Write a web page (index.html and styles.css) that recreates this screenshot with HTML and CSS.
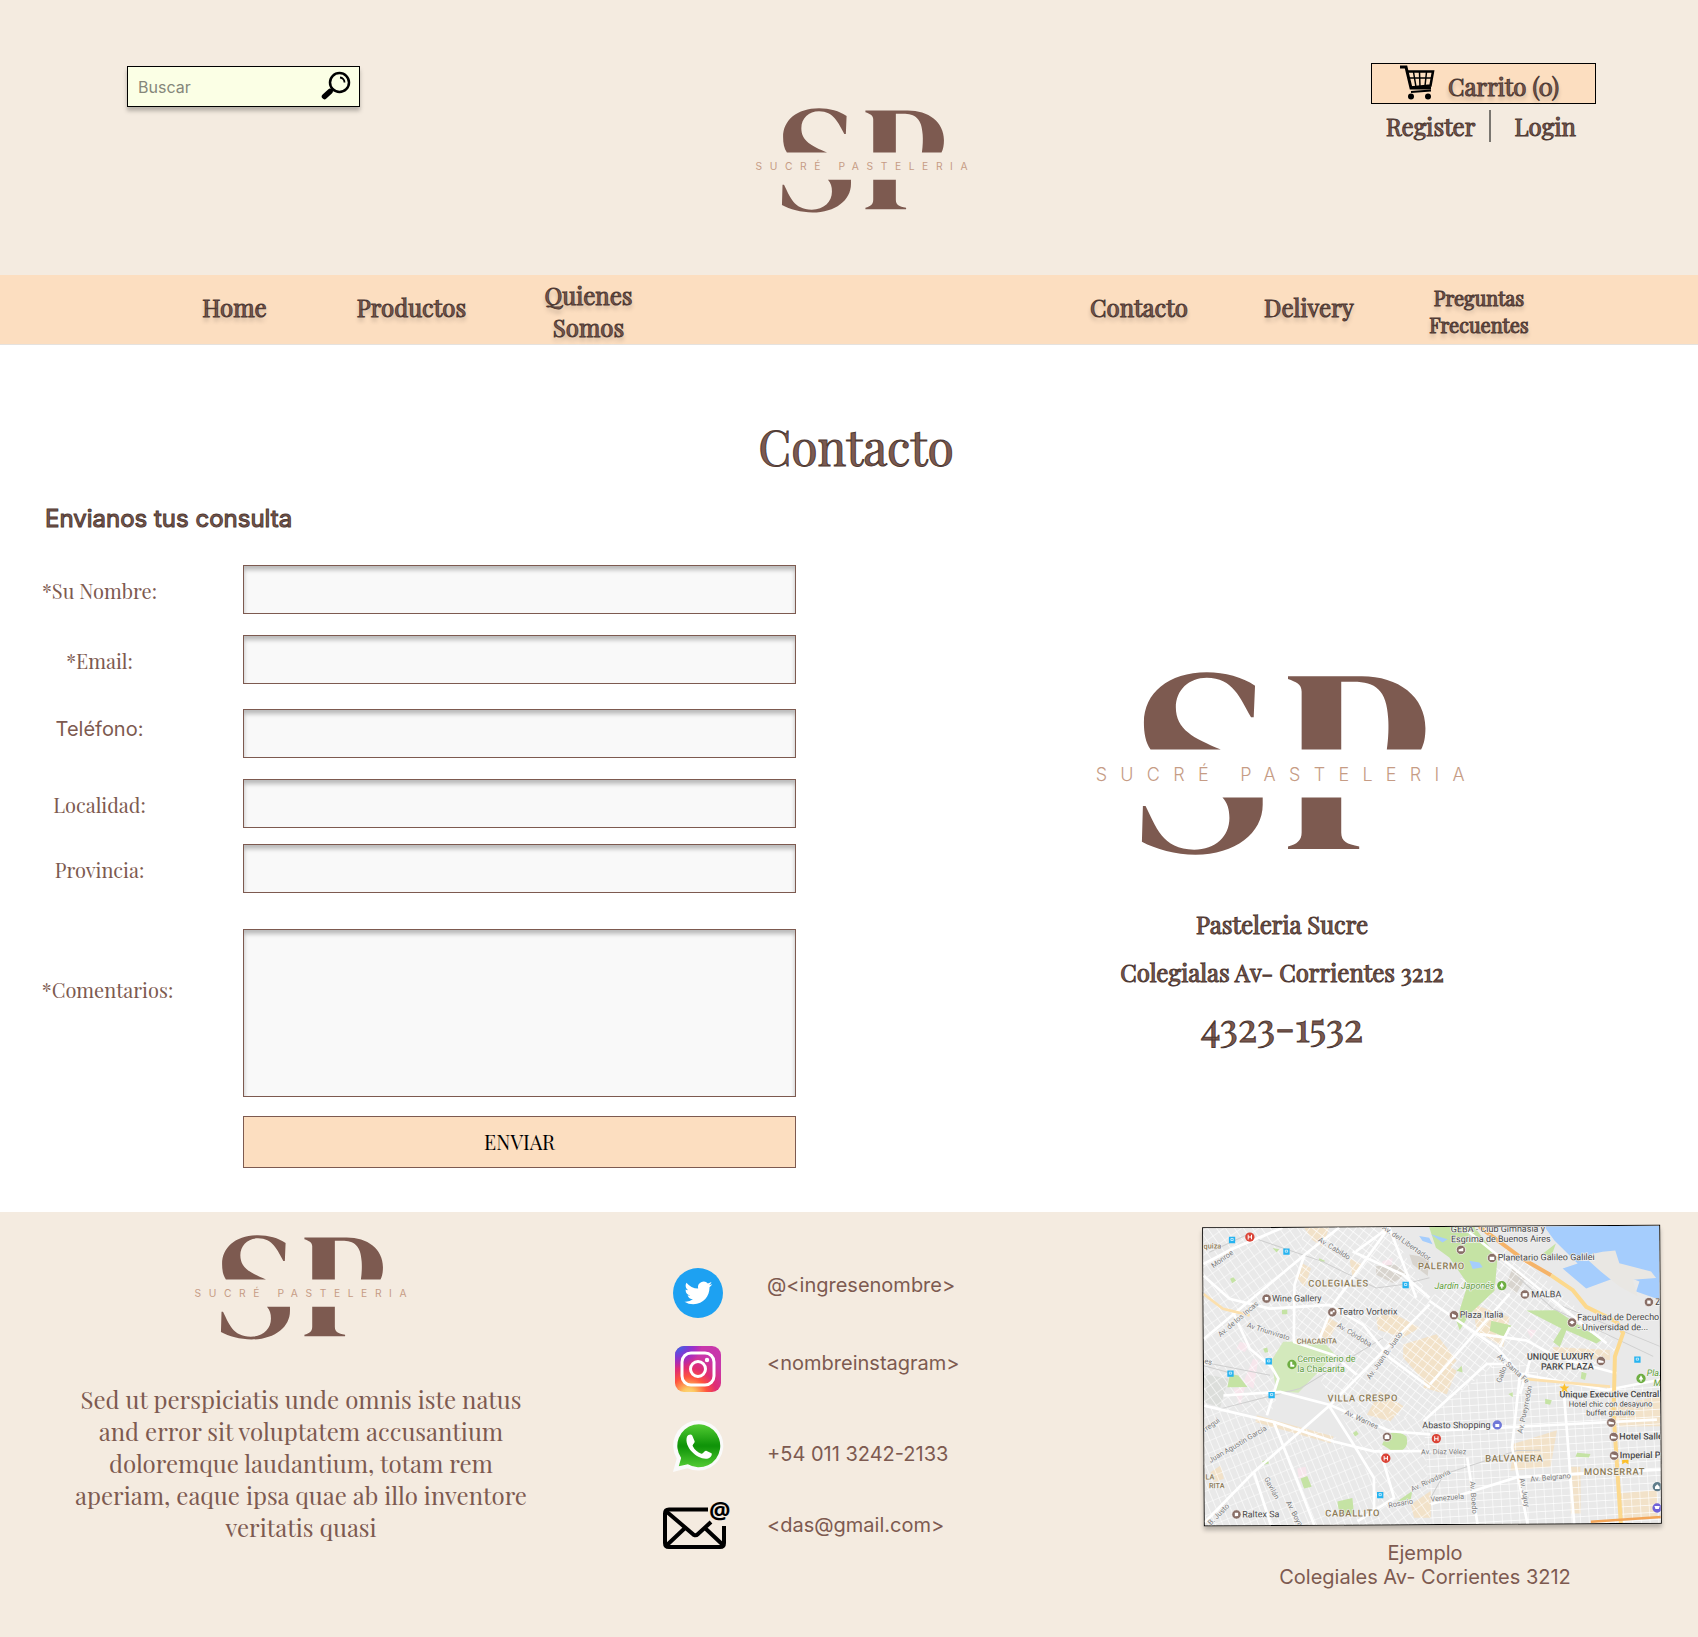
FILE: index.html
```html
<!DOCTYPE html>
<html lang="es">
<head>
<meta charset="utf-8">
<meta name="viewport" content="width=device-width, initial-scale=1">
<title>Contacto - Sucré Pasteleria</title>
<link rel="stylesheet" href="styles.css">
</head>
<body>
<svg class="defs" aria-hidden="true">
  <symbol id="monogram" viewBox="50 60 1120 560">
    <path d="M215 299C200 278 195 250 195 218C195 130 268 67 384 67C440 67 490 82 529 107L525 202H517C485 145 462 83 384 83C330 83 291 120 291 172C291 240 345 265 426 299Z"/>
    <path d="M431 443H552V465C552 550 470 615 350 615C290 615 230 598 189 576L192 469H200C230 528 250 600 346 600C410 600 452 560 452 505C452 480 446 458 431 443Z"/>
    <path d="M628 79H850C960 79 1041 140 1041 235C1041 262 1037 282 1028 299H925C930 265 931 230 929 205C925 120 890 95 825 95H788V299H669V125C669 102 652 96 628 87Z"/>
    <path d="M669 443H788V548C788 575 805 583 842 590V598H628V590C655 583 669 572 669 548Z"/>
  </symbol>
</svg>

<header class="header">
  <form class="search" role="search">
    <input class="search__input" type="search" placeholder="Buscar" aria-label="Buscar">
    <button class="search__button" type="button" aria-label="Buscar">
      <svg width="30" height="30" viewBox="0 0 30 30"><circle cx="18.500" cy="11.500" r="9.500" fill="none" stroke="#000" stroke-width="2.500"/><path d="M19 6.500a5 5 0 0 1 4.500 5" fill="none" stroke="#000" stroke-width="1.800"/><path d="M9 20.500L3.500 25.500" stroke="#000" stroke-width="5.500" stroke-linecap="round"/><path d="M10 20L12.500 17.500" stroke="#000" stroke-width="2.500"/></svg>
    </button>
  </form>
  <a class="header__logo" href="#" aria-label="Sucré Pasteleria">
    <svg class="logo" viewBox="0 60 1220 560"><use class="logo__mark" href="#monogram" x="50" y="60" width="1120" height="560"/><text class="logo__word" x="50" y="394">SUCRÉ PASTELERIA</text></svg>
  </a>
  <div class="account">
    <a class="cart" href="#">
      <svg width="36" height="35" viewBox="0 0 36 35" fill="none" stroke="#000"><path d="M1 2H7L12 23H32" stroke-width="3"/><path d="M8 6.500H34L31.500 20.500L12 22.500" stroke-width="2.500"/><path d="M14.500 7L17 22M20.500 7L21 22M27.500 7L26 21M9 13H33" stroke-width="1.500"/><path d="M12 27L32 25.500" stroke-width="2"/><circle cx="12" cy="31.500" r="3" fill="#000" stroke="none"/><circle cx="29" cy="31.500" r="3" fill="#000" stroke="none"/></svg>
      <span class="title title--raised">Carrito (0)</span>
    </a>
    <div class="account__links">
      <a class="title" href="#">Register</a>
      <a class="title account__login" href="#">Login</a>
    </div>
  </div>
</header>

<nav class="nav">
  <ul class="nav__group nav__group--left">
    <li class="nav__single"><a class="title title--raised" href="#">Home</a></li>
    <li class="nav__single"><a class="title title--raised" href="#">Productos</a></li>
    <li><a class="title title--raised" href="#">Quienes<br>Somos</a></li>
  </ul>
  <ul class="nav__group nav__group--right">
    <li class="nav__single"><a class="title title--raised" href="#">Contacto</a></li>
    <li class="nav__single"><a class="title title--raised" href="#">Delivery</a></li>
    <li><a class="title title--raised title--small" href="#">Preguntas<br>Frecuentes</a></li>
  </ul>
</nav>

<main class="main">
  <h1 class="title main__title">Contacto</h1>
  <form class="form">
    <h2 class="form__title">Envianos tus consulta</h2>
    <div class="row"><label for="nombre">*Su Nombre:</label><input id="nombre" type="text"></div>
    <div class="row"><label for="email">*Email:</label><input id="email" type="email"></div>
    <div class="row row--phone"><label for="telefono">Teléfono:</label><input id="telefono" type="tel"></div>
    <div class="row"><label for="localidad">Localidad:</label><input id="localidad" type="text"></div>
    <div class="row row--tight"><label for="provincia">Provincia:</label><input id="provincia" type="text"></div>
    <div class="row row--comments"><label for="comentarios">*Comentarios:</label><textarea id="comentarios"></textarea></div>
    <button class="form__submit" type="button">ENVIAR</button>
  </form>
  <section class="shop">
    <svg class="logo logo--large" viewBox="0 60 1220 560" role="img" aria-label="Sucré Pasteleria"><use class="logo__mark" href="#monogram" x="50" y="60" width="1120" height="560"/><text class="logo__word" x="50" y="394">SUCRÉ PASTELERIA</text></svg>
    <p class="title shop__name">Pasteleria Sucre</p>
    <p class="title shop__address">Colegialas Av- Corrientes 3212</p>
    <p class="title shop__phone">4323-1532</p>
  </section>
</main>

<footer class="footer">
  <section class="about">
    <svg class="logo" viewBox="0 60 1220 560" role="img" aria-label="Sucré Pasteleria"><use class="logo__mark" href="#monogram" x="50" y="60" width="1120" height="560"/><text class="logo__word" x="50" y="394">SUCRÉ PASTELERIA</text></svg>
    <p class="about__text">Sed ut perspiciatis unde omnis iste natus<br>and error sit voluptatem accusantium<br>doloremque laudantium, totam rem<br>aperiam, eaque ipsa quae ab illo inventore<br>veritatis quasi</p>
  </section>
  <ul class="social">
    <li>
      <span class="social__icon"><svg width="50" height="50" viewBox="0 0 50 50"><circle cx="25" cy="25" r="25" fill="#1da1f2"/><path transform="translate(11.500 11) scale(1.160)" fill="#fff" d="M23.953 4.570a10 10 0 01-2.825.775 4.958 4.958 0 002.163-2.723c-.951.555-2.005.959-3.127 1.184a4.920 4.920 0 00-8.384 4.482C7.690 8.095 4.067 6.130 1.640 3.162a4.822 4.822 0 00-.666 2.475c0 1.710.870 3.213 2.188 4.096a4.904 4.904 0 01-2.228-.616v.060a4.923 4.923 0 003.946 4.827 4.996 4.996 0 01-2.212.085 4.936 4.936 0 004.604 3.417 9.867 9.867 0 01-6.102 2.105c-.390 0-.779-.023-1.170-.067a13.995 13.995 0 007.557 2.209c9.053 0 13.998-7.496 13.998-13.985 0-.210 0-.420-.015-.630A9.935 9.935 0 0024 4.590z"/></svg></span>
      <a href="#">@&lt;ingresenombre&gt;</a>
    </li>
    <li>
      <span class="social__icon"><svg width="46" height="46" viewBox="0 0 46 46"><defs><radialGradient id="ig-a" cx=".3" cy="1.070" r="1"><stop offset="0" stop-color="#fd8"/><stop offset=".15" stop-color="#fdc760"/><stop offset=".4" stop-color="#ff543e"/><stop offset=".6" stop-color="#e02d72"/><stop offset=".9" stop-color="#c837ab"/></radialGradient><radialGradient id="ig-b" cx="0" cy="-.1" r=".6"><stop offset="0" stop-color="#3771c8"/><stop offset=".3" stop-color="#4a5fe0"/><stop offset="1" stop-color="#6600ff" stop-opacity="0"/></radialGradient></defs><rect width="46" height="46" rx="9" fill="url(#ig-a)"/><rect width="46" height="46" rx="9" fill="url(#ig-b)"/><rect x="7" y="7" width="32" height="32" rx="9" fill="none" stroke="#fff" stroke-width="3"/><circle cx="23" cy="23" r="7.500" fill="none" stroke="#fff" stroke-width="3"/><circle cx="32" cy="14" r="2.200" fill="#fff"/></svg></span>
      <a href="#">&lt;nombreinstagram&gt;</a>
    </li>
    <li class="social__whatsapp">
      <span class="social__icon"><svg width="52" height="52" viewBox="0 0 54 54"><defs><linearGradient id="wa" x1="0" y1="0" x2="0" y2="1"><stop offset="0" stop-color="#52cb33"/><stop offset=".48" stop-color="#109409"/><stop offset=".52" stop-color="#109409"/><stop offset="1" stop-color="#52cb33"/></linearGradient></defs><path fill="#fafafa" d="M1 54L5 40A26 26 0 1 1 16 50Z"/><path fill="url(#wa)" d="M7 48L9.500 39.500A22.300 22.300 0 1 1 16.500 46Z"/><path fill="#fff" d="M15.500 17.500C17 14.500 20 14.500 21 16L23.500 22C24 23.500 21 25.500 21.500 27C23.500 31 26.500 33.500 30.500 35C32.500 35.500 33.500 31.500 35.500 32L41 34.500C42 36 40.500 39 37.500 40C28 42.500 12 29 15.500 17.500Z"/></svg></span>
      <a href="#">+54 011 3242-2133</a>
    </li>
    <li class="social__mail">
      <span class="social__icon"><svg width="70" height="50" viewBox="0 0 70 50"><path d="M45 9.500H6Q2 9.500 2 13.500V43Q2 47 6 47H57Q61 47 61 43V26" fill="none" stroke="#000" stroke-width="4"/><path d="M4 12L31 35Q33 36 35 34L48 22M4 45L22 28M60 45L43 29" fill="none" stroke="#000" stroke-width="4"/><text class="social__at" x="46" y="19">@</text></svg></span>
      <a href="#">&lt;das@gmail.com&gt;</a>
    </li>
  </ul>
  <figure class="place">
    <svg class="map" viewBox="42 38 1368 892" role="img" aria-label="Mapa de Buenos Aires">
      <defs>
        <pattern id="st-west" width="22" height="30" patternUnits="userSpaceOnUse" patternTransform="rotate(-35)"><path d="M0 0H22M0 0V30" stroke="#fff" stroke-width="3.500"/></pattern>
        <pattern id="st-mid" width="22" height="22" patternUnits="userSpaceOnUse" patternTransform="rotate(38)"><path d="M0 0H22M0 0V22" stroke="#fff" stroke-width="3.500"/></pattern>
        <pattern id="st-east" width="26" height="22" patternUnits="userSpaceOnUse" patternTransform="rotate(-3)"><path d="M0 0H26M0 0V22" stroke="#fff" stroke-width="3.500"/></pattern>
        <pattern id="st-south" width="20" height="34" patternUnits="userSpaceOnUse" patternTransform="rotate(-22)"><path d="M0 0H20M0 0V34" stroke="#fff" stroke-width="3.500"/></pattern>
      </defs>
      <rect x="0" y="0" width="1440" height="960" fill="#e9e9e9"/>
      <g fill="#f2e2c9">
        <path d="M345 38H420L400 95 370 75ZM340 145L365 160 345 215 325 190ZM560 310L600 290 690 340 640 370 565 345ZM640 390L740 360 800 440 720 520 640 430ZM530 600L570 530 640 575 600 620ZM720 420L800 470 770 540 700 520ZM970 690L1100 650 1080 760 960 770ZM850 270L960 310 940 400 860 350ZM1250 580L1410 550V640L1290 640ZM390 350L420 310 445 325 410 385ZM660 870L720 830V910H670ZM1140 760H1170V900H1140ZM1290 840L1400 830V915H1290ZM1090 400L1260 410V440L1090 430ZM60 770L90 750 100 790 70 800ZM200 600L430 665 420 685 195 620ZM480 130L520 150 490 190Z"/>
      </g>
      <g fill="#f7e6ec"><path d="M150 380L180 385 165 410 140 400ZM190 430L205 435 190 520 160 500ZM130 520L165 515 150 570ZM580 140L610 130 605 160 575 155ZM320 760L345 755 350 785 325 790ZM1010 345L1040 350 1025 375Z"/></g>
      <path d="M42 475L115 490 90 575 42 560Z" fill="#dcdedb"/>
      <path d="M560 155L620 150 650 180 610 205 560 180ZM660 120L720 130 715 185 670 150ZM970 160L1010 190 980 240 950 215Z" fill="#d8d4ce"/>
      <path d="M42 38H340L320 380 240 600 42 575Z" fill="url(#st-west)"/>
      <path d="M340 38H600L720 250 950 425 700 620 430 560 320 380Z" fill="url(#st-mid)"/>
      <path d="M42 575L430 660 560 800 570 930H42Z" fill="url(#st-south)"/>
      <path d="M430 560L700 620 720 930H570L560 800Z" fill="url(#st-west)"/>
      <path d="M720 250L960 100 1290 400 1120 520 950 425Z" fill="url(#st-mid)"/>
      <path d="M700 620L950 425 1120 520 1410 520V930H720Z" fill="url(#st-east)"/>
      <g fill="#c5e3a4"><path d="M245 435L280 380 400 380 435 418 325 533 258 528Z" fill="#d3e9bc"/><path d="M120 475L145 480 172 515 112 515ZM122 190L132 185 140 195 128 203ZM330 790L350 783 363 815 340 820ZM440 860L485 850 490 900 445 895ZM220 400L232 397 235 410 225 412ZM390 130L408 138 400 142 388 137ZM277 284H293V297H277ZM215 738L232 732 235 745 220 748ZM488 655L498 648 505 658 494 665ZM250 98L270 102 262 112ZM620 860L665 830 660 855ZM575 690Q600 630 648 665Q660 710 610 712Z"/><path d="M720 38H855L925 130 915 230 840 300 810 348 800 320 835 210 780 130 740 100ZM905 320L965 335 940 368 900 350ZM1010 290L1100 290 1160 330 1235 380 1220 390 1130 350 1110 400 1090 385 1115 345ZM1060 120L1100 90 1085 130ZM800 470L815 455 818 475ZM1175 475L1190 480 1185 500 1172 495ZM1065 555L1085 560 1080 573 1065 570ZM1160 718L1200 722 1195 732 1155 730ZM955 540L968 535 968 550Z"/></g>
      <g fill="#a5cdfd"><path d="M1065 38H1410V260L1340 235 1350 205 1300 185 1190 225 1120 165 1165 150 1095 80ZM690 65L720 70 730 90 700 80ZM725 60L775 75 760 85ZM840 140L870 145 880 160 850 165Z"/></g>
      <path d="M1185 130L1215 120 1240 115 1278 112 1290 150 1385 175 1400 195 1330 200 1345 250 1290 220 1235 175Z" fill="#e9e7e3"/>
      <g fill="none" stroke="#cfcfcf" stroke-width="3"><path d="M60 110L170 60 400 140 560 220 640 210 720 190M42 440L240 480M90 580L330 520 480 430 580 370M990 180L1100 270 1410 400M985 190L1090 285 1390 430M42 450L130 475M720 850L760 780 980 710H1050"/></g>
      <g fill="none" stroke="#fff" stroke-width="8">
        <path d="M450 38L345 120 42 370M345 120L315 210 312 380M42 145L130 100 280 38M42 180L120 250 240 280 420 270 520 330 600 430 720 520M600 38L430 270 390 370M490 110L640 180 720 250M720 270L420 570 190 770 42 920M42 570L250 620 430 680 550 710 720 710M130 290L180 400 245 455 265 490 230 600M310 380L430 420 500 480M100 540L270 530 420 570 600 650 720 660M415 570L490 690 550 790V900M500 110L600 38 680 250M570 710L610 850 500 920M250 620L340 850 370 930M190 770L240 930M820 38L1250 390M720 260L920 400 990 480 1250 530 1410 500M870 360L1010 380 1100 430 1280 480M930 400L960 340M990 480L965 700 1010 930M1020 440L990 540M700 620L890 450H950M720 650L960 640 1400 620M830 730L860 930M1120 520L1150 930M720 870L980 790 1410 770M960 240L720 510"/>
      </g>
      <g fill="none" stroke="#fce0ad" stroke-width="8"><path d="M42 235L100 280 180 300M1000 495L1260 520"/></g>
      <g fill="none" stroke="#f7c578" stroke-width="12"><path d="M870 38L1000 135 1085 185" stroke="#f5b368"/><path d="M1085 185L1150 230 1190 280 1280 325 1300 360 1275 430 1270 600 1290 930" stroke="#fcd98d"/></g>
      <path d="M1200 925L1410 912" stroke="#f3a557" stroke-width="7"/>

      <g class="map__street">
        <text transform="translate(72 158) rotate(-35)">Monroe</text>
        <text transform="translate(385 78) rotate(32)">Av. Cabildo</text>
        <text transform="translate(578 42) rotate(35)">Av. del Libertador</text>
        <text transform="translate(92 365) rotate(-40)">Av. de los Incas</text>
        <text transform="translate(170 335) rotate(18)">Av Triunvirato</text>
        <text transform="translate(440 335) rotate(32)">Av. Córdoba</text>
        <text transform="translate(540 495) rotate(-54)">Av. Juan B. Justo</text>
        <text transform="translate(462 598) rotate(25)">Av. Warnes</text>
        <text transform="translate(44 650) rotate(-35)">rregui</text>
        <text transform="translate(60 742) rotate(-30)">Juan Agustín García</text>
        <text transform="translate(220 790) rotate(62)">Gavilán</text>
        <text transform="translate(285 862) rotate(62)">Av. Boyacá</text>
        <text transform="translate(60 930) rotate(-45)">B. Justo</text>
        <text transform="translate(594 880) rotate(-10)">Rosario</text>
        <text transform="translate(665 832) rotate(-25)">Av. Rivadavia</text>
        <text x="692" y="720">Av. Díaz Vélez</text>
        <text transform="translate(720 862) rotate(-5)">Venezuela</text>
        <text transform="translate(838 802) rotate(86)">Av. Boedo</text>
        <text transform="translate(987 795) rotate(80)">Av. Jujuy</text>
        <text transform="translate(1020 804) rotate(-5)">Av. Belgrano</text>
        <text transform="translate(920 430) rotate(42)">Av. Santa Fe</text>
        <text transform="translate(932 508) rotate(-68)">Gallo</text>
        <text transform="translate(996 660) rotate(-78)">Av. Pueyrredón</text>
        <text transform="translate(42 442) rotate(15)">es</text>
      </g>
      <g class="map__area">
        <text x="356" y="215">COLEGIALES</text><text x="686" y="165">PALERMO</text><text x="412" y="560">VILLA CRESPO</text><text x="403" y="905">CABALLITO</text><text x="884" y="743">BALVANERA</text><text x="1180" y="785">MONSERRAT</text>
        <g class="map__area--small"><text x="321" y="386">CHACARITA</text><text x="43" y="99">quiza</text><text x="45" y="792">LA</text><text x="55" y="818">RITA</text></g>
      </g>
      <g class="map__park"><text x="322" y="441">Cementerio de</text><text x="322" y="471">la Chacarita</text><text class="map__italic" x="735" y="224">Jardín Japonés</text><text class="map__italic" x="1370" y="489">Pla.</text><text class="map__italic" x="1390" y="519">M</text></g>
      <g class="map__poi">
        <text x="247" y="259">Wine Gallery</text><text x="446" y="300">Teatro Vorterix</text><text x="154" y="906">Raltex Sa</text><text x="785" y="54">GEBA - Club Gimnasia y</text><text x="785" y="84">Esgrima de Buenos Aires</text><text x="925" y="140">Planetario Galileo Galilei</text><text x="1025" y="251">MALBA</text><text x="810" y="311">Plaza Italia</text><text x="1163" y="321">Facultad de Derecho</text><text x="1163" y="351">- Universidad de...</text><text x="696" y="642">Abasto Shopping</text><text x="1397" y="276">Z</text>
        <g class="map__poi--bold"><text x="1011" y="438">UNIQUE LUXURY</text><text x="1053" y="468">PARK PLAZA</text><text x="1108" y="552">Unique Executive Central</text><text x="1287" y="679">Hotel Salles</text><text x="1288" y="735">Imperial Park</text></g>
        <g class="map__poi--note"><text x="1136" y="580">Hotel chic con desayuno</text><text x="1188" y="606">buffet gratuito</text></g>
      </g>
      <g fill="#896f67" stroke="#fff" stroke-width="2"><circle cx="231" cy="250" r="14"/><circle cx="428" cy="292" r="14"/><circle cx="137" cy="897" r="14"/><circle cx="590" cy="667" r="14"/><circle cx="815" cy="107" r="14"/><circle cx="908" cy="132" r="14"/><circle cx="1006" cy="242" r="14"/><circle cx="793" cy="303" r="14"/><circle cx="1147" cy="327" r="14"/><circle cx="1378" cy="267" r="14"/><circle cx="1233" cy="443" r="14"/><circle cx="1263" cy="628" r="14"/><circle cx="1270" cy="671" r="14"/><circle cx="1271" cy="727" r="14"/></g>
      <g fill="#fff"><rect x="226" y="245" width="10" height="10"/><rect x="132" y="892" width="10" height="10"/><rect x="1373" y="262" width="10" height="10"/><path d="M422 290H430V286H435V292H429V298H422ZM583 663L590 659 597 663V673H583ZM808 106L822 101V111H808ZM901 128H915V138H901ZM999 238H1013V248H999ZM787 298L799 303V309H787ZM1139 326L1147 321 1155 326 1147 333ZM1225 439L1241 443V448H1225ZM1255 624L1271 628V633H1255ZM1262 667L1278 671V676H1262ZM1263 723L1279 727V732H1263Z"/></g>
      <g fill="#6eae43"><circle cx="306" cy="448" r="14"/><circle cx="937" cy="215" r="14"/><circle cx="1353" cy="496" r="14"/></g>
      <path d="M301 440H307V449H313V455H301ZM937 205L944 218H939V224H935V218H930ZM1353 486L1360 499H1355V505H1351V499H1346Z" fill="#fff"/>
      <g fill="#db4437"><circle cx="182" cy="65" r="14"/><circle cx="586" cy="731" r="14"/><circle cx="738" cy="673" r="14"/></g>
      <path d="M177 58V72M187 58V72M177 65H187M581 724V738M591 724V738M581 731H591M733 666V680M743 666V680M733 673H743" stroke="#fff" stroke-width="3"/>
      <g fill="#25b3f0"><path d="M119 64H138V83H119ZM282 100H301V119H282ZM639 202H658V221H639ZM227 429H246V448H227ZM112 465H131V484H112ZM235 530H254V549H235ZM559 832H578V851H559ZM1333 430H1352V449H1333Z"/></g>
      <path d="M125 69H132V75H125ZM288 105H295V111H288ZM645 207H652V213H645ZM233 434H240V440H233ZM118 470H125V476H118ZM241 535H248V541H241ZM565 837H572V843H565ZM1339 435H1346V441H1339Z" fill="#25b3f0" stroke="#fff" stroke-width="2"/>
      <circle cx="921" cy="633" r="14" fill="#6f78d8"/><circle cx="1400" cy="821" r="14" fill="#607d8b"/><circle cx="1399" cy="885" r="14" fill="#6f62d8"/>
      <path d="M915 630H927V639H915ZM1393 821L1400 814 1407 821V828H1393ZM1391 879H1407L1404 888H1394Z" fill="#fff"/>
      <path d="M1123 509L1127 519H1138L1129 526L1133 537L1123 530L1113 537L1117 526L1108 519H1119ZM1295 740H1314V753L1304 748 1295 753Z" fill="#fbc02d"/>
    </svg>
    <figcaption>Ejemplo<br>Colegiales Av- Corrientes 3212</figcaption>
  </figure>
</footer>
</body>
</html>
```
FILE: styles.css
```css
:root {
  --cream: #f4ebe0;
  --peach: #fcdec0;
  --brown: #7d5a50;
  --serif: "Playfair Display", "Liberation Serif", serif;
  --sans: Inter, sans-serif;
}

* {
  box-sizing: border-box;
}

body {
  margin: 0;
  background: #fff;
  color: var(--brown);
  font: 20px/24px var(--sans);
}

a {
  color: inherit;
  text-decoration: none;
}

ul {
  margin: 0;
  padding: 0;
  list-style: none;
}

.defs {
  display: none;
}

.title {
  margin: 0;
  font: 24px/32px var(--serif);
  -webkit-text-stroke: 1px #4f3a34;
}

.title--raised {
  text-shadow: 0 4px 4px rgba(0, 0, 0, 0.25);
}

.title--small {
  font-size: 20px;
  line-height: 27px;
}

.logo {
  display: block;
  width: 232px;
}

.logo--large {
  width: 406px;
}

.logo__mark {
  fill: var(--brown);
}

.logo__word {
  fill: #c69c85;
  font: 400 54px var(--sans);
  letter-spacing: 40px;
}

.logo--large .logo__word {
  font-weight: 300;
}

/* Header */
.header {
  display: grid;
  grid-template-columns: 1fr auto 1fr;
  align-items: start;
  min-height: 275px;
  padding: 63px 102px 0 127px;
  background: var(--cream);
}

.search {
  display: flex;
  align-items: center;
  width: 233px;
  height: 41px;
  margin-top: 3px;
  padding: 0 8px 0 10px;
  border: 1px solid #000;
  background: #fbffe5;
  box-shadow: 0 4px 4px rgba(0, 0, 0, 0.25);
}

.search__input {
  flex: 1;
  min-width: 0;
  padding: 0;
  border: 0;
  outline: 0;
  background: none;
  font: 16px/20px var(--sans);
}

.search__input::placeholder {
  color: #85877a;
}

.search__button {
  display: flex;
  padding: 0 0 2px;
  border: 0;
  background: none;
}

.header__logo {
  margin-top: 44px;
}

.account {
  justify-self: end;
  width: 225px;
}

.cart {
  display: flex;
  align-items: flex-end;
  gap: 13px;
  height: 41px;
  padding: 0 0 3px 27px;
  border: 1px solid #000;
  background: var(--peach);
}

.cart .title {
  line-height: 28px;
}

.account__links {
  display: flex;
  padding: 6px 0 0 15px;
}

.account__login {
  margin-left: 14px;
  padding-left: 23px;
  border-left: 2px solid #7a7670;
}

/* Navigation */
.nav {
  display: flex;
  justify-content: space-between;
  min-height: 70px;
  padding: 2px 134px 0 146px;
  border-bottom: 1px solid #e6e2de;
  background: var(--peach);
  text-align: center;
}

.nav a {
  display: block;
}

.nav__single {
  padding-bottom: 8px;
}

.nav__group {
  display: grid;
  align-items: center;
}

.nav__group--left {
  grid-template-columns: repeat(3, 177px);
}

.nav__group--right {
  grid-template-columns: repeat(3, 170px);
}

/* Contact form and shop details */
.main {
  display: grid;
  grid-template-columns: 47fr 53fr;
  padding: 69px 0 44px;
}

.main__title {
  grid-column: 1 / -1;
  padding-left: 14px;
  font-size: 48px;
  line-height: 64px;
  text-align: center;
}

.form {
  display: flex;
  flex-direction: column;
  padding-right: 2px;
}

.form__title {
  margin: 26px 0 10px 45px;
  font: 24px/30px var(--sans);
  -webkit-text-stroke: 1px #4f3a34;
}

.row {
  display: flex;
  align-items: center;
  margin-top: 21px;
}

.row label {
  flex: none;
  width: 199px;
  margin-right: 44px;
  padding-top: 2px;
  font: 20px/26px var(--serif);
  text-align: center;
}

.row input,
.row textarea {
  flex: 1;
  min-width: 0;
  height: 49px;
  padding: 8px 12px;
  border: 1px solid var(--brown);
  border-radius: 0;
  background: #f9f9f9;
  box-shadow: inset 0 4px 4px rgba(0, 0, 0, 0.25);
  font: 20px/24px var(--sans);
}

.row textarea {
  height: 168px;
  resize: none;
}

.row--phone {
  margin-top: 25px;
}

.row--phone label {
  padding: 0 0 9px;
  font: 20px/24px var(--sans);
}

.row--tight {
  margin-top: 16px;
}

.row--comments {
  margin-top: 36px;
}

.row--comments label {
  padding: 0 0 46px 16px;
}

.form__submit {
  height: 52px;
  margin: 19px 0 0 243px;
  border: 1px solid var(--brown);
  background: var(--peach);
  color: #000;
  font: 20px/26px var(--serif);
}

.shop {
  display: flex;
  flex-direction: column;
  align-items: center;
  padding: 192px 0 0 68px;
}

.shop__name {
  margin-top: 52px;
}

.shop__address {
  margin-top: 16px;
}

.shop__phone {
  margin-top: 12px;
  font-size: 40px;
  line-height: 52px;
}

/* Footer */
.footer {
  display: grid;
  grid-template-columns: 474px 1fr 458px;
  min-height: 425px;
  padding: 14px 37px 0 64px;
  background: var(--cream);
}

.about {
  display: flex;
  flex-direction: column;
  align-items: center;
  padding-top: 8px;
}

.about__text {
  margin: 43px 0 0;
  font: 24px/32px var(--serif);
  text-align: center;
  white-space: nowrap;
}

.social {
  display: flex;
  flex-direction: column;
  gap: 28px;
  padding: 42px 0 0 122px;
}

.social li {
  display: flex;
}

.social a {
  padding-top: 5px;
}

.social__icon {
  display: flex;
  justify-content: center;
  flex: none;
  width: 76px;
  margin-right: 31px;
}

.social .social__whatsapp {
  align-items: flex-end;
}

.social__whatsapp a {
  padding-bottom: 6px;
}

.social .social__mail {
  align-items: center;
}

.social__mail a {
  padding: 0;
}

.social__at {
  fill: #000;
  font: 700 24px "Open Sans", sans-serif;
}

.place {
  margin: 0;
  text-align: center;
}

.map {
  display: block;
  width: 100%;
  border: 1px solid #000;
  box-shadow: 0 4px 4px rgba(0, 0, 0, 0.25);
  transform: rotate(-0.33deg);
  font-family: Roboto, sans-serif;
}

.place figcaption {
  margin-top: 16px;
  padding-right: 14px;
}

.map text {
  paint-order: stroke;
  stroke: #f4f4f4;
  stroke-width: 4px;
}

.map__street {
  fill: #7c7c7c;
  font-size: 22px;
}

.map__area {
  fill: #8d7b55;
  font-size: 28px;
  font-weight: 500;
  letter-spacing: 2px;
}

.map__area--small {
  font-size: 22px;
  letter-spacing: 0;
}

.map__park {
  fill: #5f9f3a;
  font-size: 27px;
}

.map__italic {
  font-style: italic;
}

.map__poi {
  fill: #484848;
  font-size: 27px;
}

.map__poi--bold {
  font-weight: 500;
}

.map__poi--note {
  font-size: 23px;
}
```
